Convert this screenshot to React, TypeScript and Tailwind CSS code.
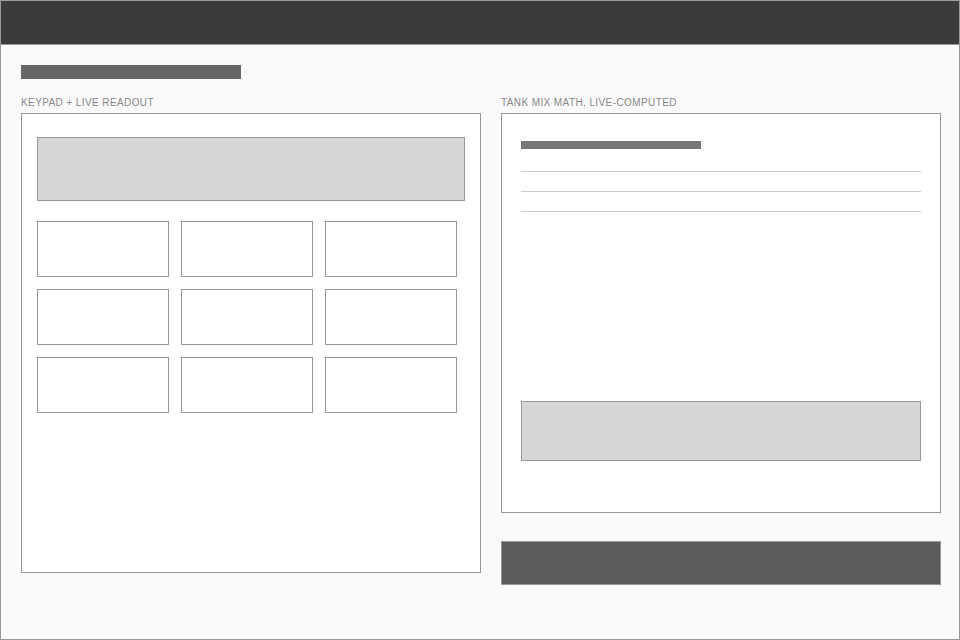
// Sprayer calculator wireframe: keypad on the left, tank mix math on the right.
const keys = ["k1", "k2", "k3", "k4", "k5", "k6", "k7", "k8", "k9"];
const mixRows = ["product", "rate", "acres"];

function SectionLabel({ children }: { children: string }) {
  return (
    <div
      className="h-[12px] mb-[4px] text-[10px] leading-[12px] uppercase tracking-[0.4px] text-[#888]"
      style={{ fontFamily: "'Liberation Sans', Arial, sans-serif" }}
    >
      {children}
    </div>
  );
}

export default function App() {
  return (
    <div className="w-[960px] h-[640px] border border-[#999] bg-[#fafafa] overflow-hidden">
      {/* Top bar */}
      <div className="h-[44px] bg-[#3b3b3b] border-b border-[#999]" />

      <div className="px-[20px] pt-[20px]">
        {/* Page title placeholder */}
        <div className="w-[220px] h-[14px] bg-[#666]" />

        <div className="flex gap-5 mt-[18px]">
          {/* Keypad + readout */}
          <div className="w-[460px] shrink-0">
            <SectionLabel>Keypad + live readout</SectionLabel>
            <div className="h-[460px] border border-[#999] bg-white pt-[23px] px-[15px]">
              <div className="h-[64px] border border-[#999] bg-[#d6d6d6]" />
              <div className="grid grid-cols-[repeat(3,132px)] gap-3 mt-5">
                {keys.map((k) => (
                  <button key={k} className="h-[56px] border border-[#999] bg-white" />
                ))}
              </div>
            </div>
          </div>

          {/* Tank mix math */}
          <div className="w-[440px] shrink-0">
            <SectionLabel>Tank mix math, live-computed</SectionLabel>
            <div className="h-[400px] border border-[#999] bg-white pt-[27px] px-[19px] pb-[51px] flex flex-col">
              <div className="w-[180px] h-[8px] bg-[#777]" />
              <div className="mt-[22px] flex flex-col gap-[19px]">
                {mixRows.map((r) => (
                  <div key={r} className="h-px bg-[#ccc]" />
                ))}
              </div>
              <div className="mt-auto h-[60px] border border-[#999] bg-[#d6d6d6]" />
            </div>
            <button className="block w-full h-[44px] mt-[28px] border border-[#999] bg-[#5c5c5c]" />
          </div>
        </div>
      </div>
    </div>
  );
}
